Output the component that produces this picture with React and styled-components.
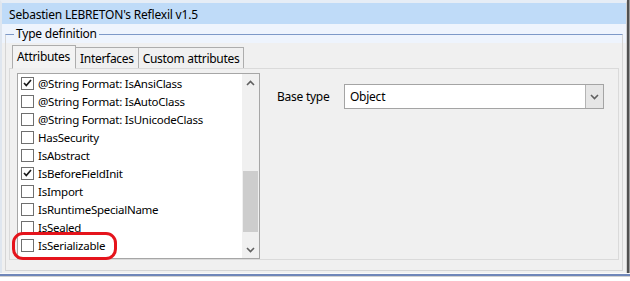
import React from 'react'
import styled, { createGlobalStyle } from 'styled-components'

const GlobalStyle = createGlobalStyle`
  html, body {
    margin: 0;
    padding: 0;
    background: #ffffff;
  }
  body {
    font-family: "Noto Sans", "Open Sans", sans-serif;
    font-size: 11.5px;
    letter-spacing: -0.25px;
    color: #000;
  }
`

const Window = styled.div`
  width: 630px;
  height: 281px;
  box-sizing: border-box;
  display: flex;
  flex-direction: column;
  background: #ffffff;
  overflow: hidden;
`

const Frame = styled.div`
  width: 627px;
  height: 273px;
  box-sizing: border-box;
  display: flex;
  flex-direction: column;
  border-top: 3px solid #e6edf6;
  border-left: 2px solid #dfe6ef;
  border-right: 1px solid #d0d0d0;
  box-shadow: 2px 0 0 #505050, 3px 0 0 #9a9a9a;
  background: #f0f0f0;
`

const TitleBar = styled.div`
  height: 21px;
  flex: none;
  display: flex;
  align-items: center;
  padding: 1px 0 0 7px;
  box-sizing: border-box;
  background: #bfdbf8;
  font-size: 12px;
  letter-spacing: -0.2px;
`

const Body = styled.div`
  flex: 1;
  display: flex;
  flex-direction: column;
  padding: 2px 3px 2px 3px;
  background: linear-gradient(to bottom, #eef4fd 0px, #eef4fd 19px, #f0f0f0 19px);
`

const GroupBox = styled.fieldset`
  flex: 1;
  margin: 0;
  padding: 0 3px 3px 3px;
  border: 1px solid #d5d5d5;
  border-top-color: #7d99c8;
  display: flex;
  flex-direction: column;
  min-width: 0;
`

const Legend = styled.legend`
  padding: 0 2px;
  margin-left: 5px;
  font-size: 12px;
  letter-spacing: -0.2px;
  line-height: 16px;
`

const TabStrip = styled.div`
  display: flex;
  align-items: flex-end;
  height: 24px;
  padding-left: 3px;
  margin-top: 2px;
`

const Tab = styled.div`
  height: ${p => (p.$active ? '24px' : '21px')};
  box-sizing: border-box;
  padding: ${p => (p.$active ? '2px 5px 0 4px' : '1px 4px 0 4px')};
  margin-left: ${p => (p.$first ? '0' : '-1px')};
  border: 1px solid #adadad;
  border-bottom: ${p => (p.$active ? '1px solid #f0f0f0' : 'none')};
  background: ${p => (p.$active ? '#f3f3f3' : '#f0f0f0')};
  display: flex;
  align-items: ${p => (p.$active ? 'flex-start' : 'center')};
  font-size: 12px;
  letter-spacing: -0.3px;
  position: relative;
  z-index: ${p => (p.$active ? 2 : 1)};
  margin-bottom: ${p => (p.$active ? '-1px' : '0')};
`

const TabPage = styled.div`
  flex: 1;
  border: 1px solid #dadada;
  box-sizing: border-box;
  display: flex;
  align-items: flex-start;
  padding: 4px 0 0 7px;
`

const ListBox = styled.div`
  width: 243px;
  height: 186px;
  box-sizing: border-box;
  border: 1px solid #a6a6a6;
  background: #ffffff;
  display: flex;
  flex: none;
`

const ListItems = styled.div`
  flex: 1;
  display: flex;
  flex-direction: column;
`

const Item = styled.div`
  height: 18px;
  display: flex;
  align-items: center;
  gap: 4px;
  padding-left: 3px;
  white-space: nowrap;
  position: relative;
`

const CheckBox = styled.span`
  width: 13px;
  height: 13px;
  box-sizing: border-box;
  border: 1px solid #6f6f6f;
  background: #fff;
  flex: none;
  display: flex;
  align-items: center;
  justify-content: center;
`

const Highlight = styled.span`
  position: absolute;
  left: -6px;
  top: -4px;
  width: 99px;
  height: 22px;
  border: 3px solid #e5141c;
  border-radius: 11px;
`

const ScrollBar = styled.div`
  width: 17px;
  flex: none;
  background: #f0f0f0;
  display: flex;
  flex-direction: column;
  align-items: center;
`

const ScrollArrow = styled.div`
  height: 17px;
  display: flex;
  align-items: center;
  justify-content: center;
`

const ScrollTrack = styled.div`
  flex: 1;
  width: 100%;
  display: flex;
  flex-direction: column;
  justify-content: flex-end;
`

const Thumb = styled.div`
  height: 61px;
  width: 15px;
  margin: 0 auto 9px auto;
  background: #cdcdcd;
`

const FormArea = styled.div`
  display: flex;
  align-items: center;
  margin-left: 17px;
  margin-top: 11px;
`

const Label = styled.span`
  width: 67px;
  font-size: 12px;
`

const Combo = styled.div`
  width: 260px;
  height: 25px;
  box-sizing: border-box;
  border: 1px solid #a4a4a4;
  background: #ffffff;
  display: flex;
`

const ComboText = styled.div`
  flex: 1;
  display: flex;
  align-items: center;
  padding-left: 5px;
  font-size: 12px;
`

const ComboButton = styled.div`
  width: 17px;
  background: #e6e6e6;
  border-left: 1px solid #b4b4b4;
  display: flex;
  align-items: center;
  justify-content: center;
`

const BottomEdge = styled.div`
  height: 8px;
  width: 630px;
  background: linear-gradient(to bottom, #fafafa 0px, #fafafa 1px, #6f86b9 1px, #6f86b9 3px, #d0d0d0 3px, #d0d0d0 4px, #ffffff 4px);
`

const Check = () => (
  <svg width="9" height="8" viewBox="0 0 9 8">
    <path d="M1 4 L3.3 6.5 L8 1" fill="none" stroke="#1a1a1a" strokeWidth="1.7" />
  </svg>
)

const Chevron = ({ up }) => (
  <svg width="9" height="6" viewBox="0 0 9 6">
    <path d={up ? 'M1 5 L4.5 1.5 L8 5' : 'M1 1 L4.5 4.5 L8 1'} fill="none" stroke="#606060" strokeWidth="1.6" />
  </svg>
)

const attributes = [
  { name: '@String Format: IsAnsiClass', checked: true },
  { name: '@String Format: IsAutoClass' },
  { name: '@String Format: IsUnicodeClass' },
  { name: 'HasSecurity' },
  { name: 'IsAbstract' },
  { name: 'IsBeforeFieldInit', checked: true },
  { name: 'IsImport' },
  { name: 'IsRuntimeSpecialName' },
  { name: 'IsSealed' },
  { name: 'IsSerializable', marked: true },
]

export default function App() {
  return (
    <>
      <GlobalStyle />
      <Window>
        <Frame>
          <TitleBar>Sebastien LEBRETON's Reflexil v1.5</TitleBar>
          <Body>
            <GroupBox>
              <Legend>Type definition</Legend>
              <TabStrip>
                <Tab $active $first>Attributes</Tab>
                <Tab>Interfaces</Tab>
                <Tab>Custom attributes</Tab>
              </TabStrip>
              <TabPage>
                <ListBox>
                  <ListItems>
                    {attributes.map(a => (
                      <Item key={a.name}>
                        <CheckBox>{a.checked && <Check />}</CheckBox>
                        {a.name}
                        {a.marked && <Highlight />}
                      </Item>
                    ))}
                  </ListItems>
                  <ScrollBar>
                    <ScrollArrow><Chevron up /></ScrollArrow>
                    <ScrollTrack><Thumb /></ScrollTrack>
                    <ScrollArrow><Chevron /></ScrollArrow>
                  </ScrollBar>
                </ListBox>
                <FormArea>
                  <Label>Base type</Label>
                  <Combo>
                    <ComboText>Object</ComboText>
                    <ComboButton><Chevron /></ComboButton>
                  </Combo>
                </FormArea>
              </TabPage>
            </GroupBox>
          </Body>
        </Frame>
        <BottomEdge />
      </Window>
    </>
  )
}
